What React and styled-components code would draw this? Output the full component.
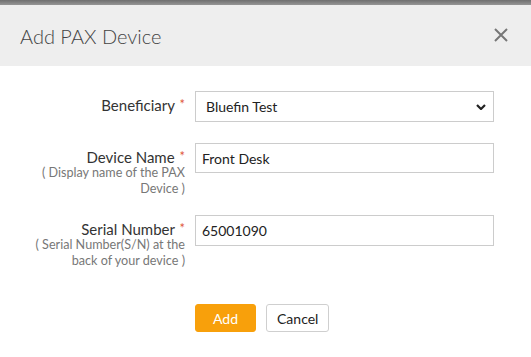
import React from 'react'
import styled, { createGlobalStyle } from 'styled-components'

const GlobalStyle = createGlobalStyle`
	body {
		margin: 0;
		background: #fff;
		font-family: Lato, 'Open Sans', sans-serif;
		color: #333;
	}
`

const Backdrop = styled.div`
	height: 5px;
	background: linear-gradient(#6f6f6f, #959595);
`

const Header = styled.header`
	display: flex;
	align-items: center;
	justify-content: space-between;
	height: 61px;
	padding: 0 23px 0 20px;
	background: #eeeeee;
`

const Title = styled.h4`
	margin: 0;
	font-size: 20px;
	font-weight: 300;
	color: #444;
`

const Close = styled.button`
	display: flex;
	padding: 0;
	margin-top: -2px;
	border: 0;
	background: none;
	cursor: pointer;
`

const Form = styled.form`
	padding: 25px 0 0 34px;
`

const Field = styled.div`
	display: grid;
	grid-template-columns: 151px 299px;
	column-gap: 10px;
	align-items: start;
	margin-bottom: ${p => p.$gap ?? 21}px;
`

const LabelCol = styled.div`
	text-align: right;
	padding-top: 4px;
`

const Label = styled.label`
	display: block;
	font-size: 15px;
	line-height: 18px;
	color: #333;
`

const Required = styled.span`
	color: #e0573a;
	font-size: 13px;
	vertical-align: 2px;
	margin-left: 1px;
`

const Help = styled.div`
	margin-top: -1px;
	font-size: 12.6px;
	line-height: 16px;
	color: #777;
`

const SelectWrap = styled.div`
	position: relative;
`

const Select = styled.select`
	appearance: none;
	width: 100%;
	height: 31px;
	padding: 0 10px;
	border: 1px solid #cccccc;
	border-radius: 0;
	background: #fff;
	font-family: inherit;
	font-size: 14px;
	color: #222;
`

const Chevron = styled.svg`
	position: absolute;
	right: 8px;
	top: 13px;
	pointer-events: none;
`

const Input = styled.input`
	box-sizing: border-box;
	width: 100%;
	height: ${p => p.$h || 30}px;
	padding: 0 6px;
	border: 1px solid #cccccc;
	font-family: inherit;
	font-size: 14px;
	color: #222;
	outline: none;
`

const Actions = styled.div`
	display: flex;
	gap: 10px;
	padding: 35px 0 0 195px;
`

const Button = styled.button`
	height: 28px;
	padding: 0 ${p => (p.$primary ? 17 : 10)}px;
	border: 1px solid ${p => (p.$primary ? '#f8a00b' : '#cfcfcf')};
	border-radius: 3px;
	background: ${p => (p.$primary ? '#f8a00b' : '#fff')};
	color: ${p => (p.$primary ? '#fff' : '#222')};
	font-family: inherit;
	font-size: 14px;
	cursor: pointer;
`

const App = () => (
	<>
		<GlobalStyle />
		<Backdrop />
		<Header>
			<Title>Add PAX Device</Title>
			<Close aria-label="Close">
				<svg width="14" height="14" viewBox="0 0 14 14">
					<path d="M1 1L13 13M13 1L1 13" stroke="#777" strokeWidth="2" />
				</svg>
			</Close>
		</Header>

		<Form>
			<Field>
				<LabelCol>
					<Label>
						Beneficiary <Required>*</Required>
					</Label>
				</LabelCol>
				<SelectWrap>
					<Select defaultValue="bluefin">
						<option value="bluefin">Bluefin Test</option>
					</Select>
					<Chevron width="10" height="6" viewBox="0 0 10 6">
						<path d="M1 1L5 5L9 1" stroke="#222" strokeWidth="2.2" fill="none" />
					</Chevron>
				</SelectWrap>
			</Field>

			<Field $gap={18}>
				<LabelCol>
					<Label>
						Device Name <Required>*</Required>
					</Label>
					<Help>( Display name of the PAX Device )</Help>
				</LabelCol>
				<Input defaultValue="Front Desk" />
			</Field>

			<Field $gap={0}>
				<LabelCol>
					<Label>
						Serial Number <Required>*</Required>
					</Label>
					<Help>( Serial Number(S/N) at the back of your device )</Help>
				</LabelCol>
				<Input $h={31} defaultValue="65001090" />
			</Field>
		</Form>

		<Actions>
			<Button $primary type="button">Add</Button>
			<Button type="button">Cancel</Button>
		</Actions>
	</>
)

export default App
